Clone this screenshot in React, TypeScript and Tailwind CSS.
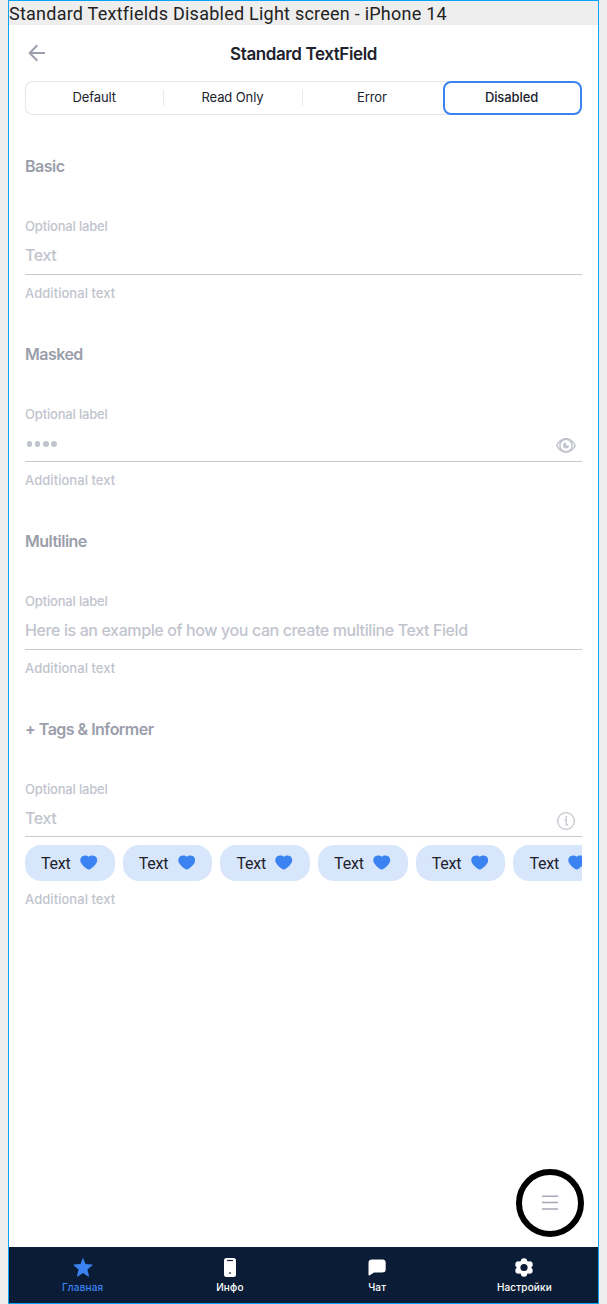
import React from "react";

function ArrowIcon() {
  return (
    <svg width="18" height="18" viewBox="0 0 18 18" fill="none" stroke="#9a9eae" strokeWidth="2">
      <path d="M17 9H2M9.3 1.3L1.7 9l7.6 7.7" />
    </svg>
  );
}

function EyeIcon() {
  return (
    <svg width="20" height="15" viewBox="0 0 20 15">
      <path
        fillRule="evenodd"
        fill="#c1c4cd"
        d="M0 7.500C2.400 2.700 6 .1 10 .1s7.600 2.600 10 7.400c-2.400 4.800-6 7.400-10 7.400S2.400 12.300 0 7.500ZM1.600 7.500c.7 1.500 1.700 2.800 2.700 3.600a6.600 6.600 0 0 1 0-7.200C3.300 4.700 2.300 6 1.600 7.500ZM18.400 7.500c-.7-1.500-1.700-2.800-2.700-3.600a6.600 6.600 0 0 1 0 7.200c1-.8 2-2.100 2.700-3.600ZM10 2.100a5.400 5.400 0 1 0 0 10.800a5.400 5.400 0 1 0 0-10.800Z"
      />
      <path d="M10 4.500a3 3 0 1 0 3 3h-2a1 1 0 0 1-1-1Z" fill="#c1c4cd" />
    </svg>
  );
}

function InfoIcon() {
  return (
    <svg width="18" height="18" viewBox="0 0 18 18" fill="none" stroke="#c1c4cd">
      <circle cx="9" cy="9" r="8.400" strokeWidth="1.200" />
      <path d="M7.500 7.500h1.700v5.300h1.900" strokeWidth="1.300" />
      <circle cx="9.100" cy="5" r="1" fill="#c1c4cd" stroke="none" />
    </svg>
  );
}

function HeartIcon() {
  return (
    <svg className="-mt-px shrink-0" width="17.500" height="15" viewBox="0 0 18 15" fill="#3b83f1">
      <path d="M9 1.500C7.500.1 4.700-.2 2.800.8.4 2.100-.2 4.800.7 7.200c1.200 3 4.500 5.600 7.300 7.300.7.400 1.300.4 2 0 2.800-1.700 6.100-4.300 7.300-7.300.9-2.400.3-5.100-2.100-6.400C13.300-.2 10.500.1 9 1.500Z" />
    </svg>
  );
}

const tabs = ["Default", "Read Only", "Error"];

function Heading({ children }: { children: React.ReactNode }) {
  return <h2 className="h-6 text-base leading-6 font-semibold tracking-[-0.52px] text-[#9a9eab]">{children}</h2>;
}

interface FieldProps {
  title: string;
  value: React.ReactNode;
  icon?: React.ReactNode;
  tags?: React.ReactNode;
}

function Field({ title, value, icon, tags }: FieldProps) {
  return (
    <section className="h-[187.5px] shrink-0">
      <Heading>{title}</Heading>
      <div className="mt-[39px] h-[18px] text-[13px] leading-[18px] font-medium tracking-[-0.18px] text-[#c1c4cd]">Optional label</div>
      <div className="mt-2 flex h-[31.6px] justify-between border-b border-[#c8cad1] pr-[6px] text-base leading-6 font-medium text-[#c1c4cd]">
        <div className="tracking-[-0.39px]">{value}</div>
        {icon}
      </div>
      {tags}
      <div className="mt-[9px] h-[18px] text-[13px] leading-[18px] font-medium tracking-[0.05px] text-[#c1c4cd]">Additional text</div>
    </section>
  );
}

function Tags() {
  return (
    <div className="mt-2 flex gap-2 overflow-hidden">
      {[0, 1, 2, 3, 4, 5].map((i) => (
        <div key={i} className="flex h-9 w-[89.7px] shrink-0 items-center gap-[9px] rounded-2xl bg-[#d8e6fb] pl-4 font-[Roboto] text-base tracking-[-0.2px] text-[#20222d]">
          <span className="w-[30px] pt-px">Text</span>
          <HeartIcon />
        </div>
      ))}
    </div>
  );
}

function NavItem({ label, active, children }: { label: string; active?: boolean; children: React.ReactNode }) {
  return (
    <div className={active ? "flex flex-1 flex-col items-center text-[#3b83f1]" : "flex flex-1 flex-col items-center text-white"}>
      <div className="mt-[10px] flex h-5 items-center">{children}</div>
      <div className="mt-[3px] text-[10px] leading-[14px] font-medium tracking-[0.15px]">{label}</div>
    </div>
  );
}

export default function App() {
  return (
    <div className="h-[1304px] w-[607px] bg-[#eeeeee] pl-2 font-[Inter,sans-serif]">
      <div className="relative flex h-[1304px] w-[591px] flex-col border border-[#08a5f4] bg-white">
        <div className="h-6 shrink-0 overflow-hidden bg-[#eeeeee] font-[Roboto] text-lg leading-[26px] tracking-[0.24px] whitespace-nowrap text-[#222222]">
          Standard Textfields Disabled Light screen - iPhone 14
        </div>
        <header className="grid h-14 shrink-0 grid-cols-[60px_1fr_60px] items-center">
          <div className="pl-[19px]"><ArrowIcon /></div>
          <h1 className="pt-1 text-center text-[17px] font-semibold tracking-[-0.4px] text-[#20222d]">Standard TextField</h1>
        </header>
        <div className="mx-4 flex h-[34px] shrink-0 rounded-lg text-[13px] tracking-[-0.1px] text-[#20222d]">
          <div className="-mr-2 flex flex-1 items-center rounded-l-lg border border-r-0 border-[#e5e5ef] pr-[10px]">
            {tabs.map((tab, i) => (
              <div key={tab} className={i < 2 ? "-ml-px flex h-4 flex-1 items-center justify-center border-r border-[#e8e8f0]" : "flex h-4 flex-1 items-center justify-center"}>
                {tab}
              </div>
            ))}
          </div>
          <div className="z-10 flex w-[139px] items-center justify-center rounded-lg border-2 border-[#3b83f1] bg-white pr-[2px] font-medium">Disabled</div>
        </div>
        <main className="mx-4 flex flex-1 flex-col pt-[39px]">
          <Field title="Basic" value="Text" />
          <Field
            title="Masked"
            value={
              <div className="flex h-6 items-center gap-[2.8px] pl-[1.5px]">
                {[0, 1, 2, 3].map((i) => <span key={i} className="mt-[3px] size-[5.5px] rounded-full bg-[#c1c4cd]" />)}
              </div>
            }
            icon={<div className="pt-[7px]"><EyeIcon /></div>}
          />
          <Field title="Multiline" value="Here is an example of how you can create multiline Text Field" />
          <Field title="+ Tags & Informer" value="Text" icon={<div className="pt-[6.5px] pr-px"><InfoIcon /></div>} tags={<Tags />} />
        </main>
        <div className="absolute top-[1168px] left-[507px] flex size-[68px] items-center justify-center rounded-full border-6 border-black bg-white">
          <svg width="16" height="16" viewBox="0 0 16 16" stroke="#a5a8b5" strokeWidth="1.500">
            <path d="M0 1.200h16M0 7.500h16M0 14h16" />
          </svg>
        </div>
        <nav className="flex h-14 shrink-0 bg-[#0b1d36]">
          <NavItem label="Главная" active>
            <svg width="20" height="20" viewBox="0 0 20 20" fill="currentColor">
              <path d="M10 .8l2.500 6.100 6.600.5c.5 0 .7.600.3.9l-5 4.300 1.600 6.300c.1.500-.4.800-.8.600L10 16l-5.200 3.500c-.4.200-.9-.1-.8-.6l1.600-6.300-5-4.300c-.4-.3-.2-.9.300-.9l6.600-.5Z" />
            </svg>
          </NavItem>
          <NavItem label="Инфо">
            <svg width="12" height="19" viewBox="0 0 12 19">
              <rect width="12" height="19" rx="2.500" fill="white" />
              <path d="M3 2.500h6" stroke="#0b1d36" strokeWidth="1.200" />
              <rect x="5" y="14" width="2" height="2" rx=".5" fill="#0b1d36" opacity=".6" />
            </svg>
          </NavItem>
          <NavItem label="Чат">
            <svg width="18" height="18" viewBox="0 0 18 18" fill="white">
              <path d="M4 1.500h10c3 0 3.700 1 3.700 4v5c0 3-.7 4-3.700 4H6l-4.200 2.800C1 17.800.5 17.500.5 16.700V5.500C.5 2.500 1.300 1.500 4 1.500Z" />
            </svg>
          </NavItem>
          <NavItem label="Настройки">
            <svg width="18" height="19" viewBox="0 0 18 19" fill="white">
              <circle cx="9" cy="3.400" r="3.200" />
              <circle cx="14.500" cy="6.400" r="3.200" />
              <circle cx="14.500" cy="12.600" r="3.200" />
              <circle cx="9" cy="15.600" r="3.200" />
              <circle cx="3.500" cy="12.600" r="3.200" />
              <circle cx="3.500" cy="6.400" r="3.200" />
              <circle cx="9" cy="9.500" r="7.200" />
              <circle cx="9" cy="9.500" r="3.600" fill="#0b1d36" />
            </svg>
          </NavItem>
        </nav>
      </div>
    </div>
  );
}
